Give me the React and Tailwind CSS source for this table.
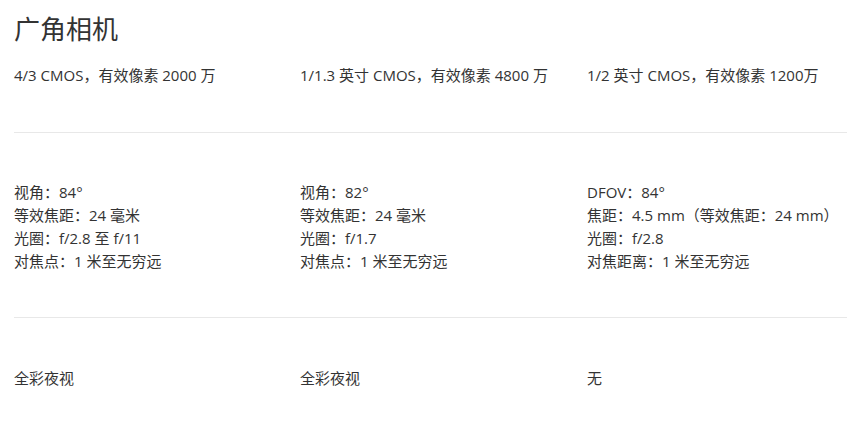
import React from 'react';

const rows = [
  [
    ['4/3 CMOS，有效像素 2000 万'],
    ['1/1.3 英寸 CMOS，有效像素 4800 万'],
    ['1/2 英寸 CMOS，有效像素 1200万'],
  ],
  [
    ['视角：84°', '等效焦距：24 毫米', '光圈：f/2.8 至 f/11', '对焦点：1 米至无穷远'],
    ['视角：82°', '等效焦距：24 毫米', '光圈：f/1.7', '对焦点：1 米至无穷远'],
    ['DFOV：84°', '焦距：4.5 mm（等效焦距：24 mm）', '光圈：f/2.8', '对焦距离：1 米至无穷远'],
  ],
  [['全彩夜视'], ['全彩夜视'], ['无']],
];

const rowPad = ['pt-[17px] pb-[45px]', 'pt-[48px] pb-[44px]', 'pt-[49px] pb-[40px]'];

export default function App() {
  return (
    <div
      className="min-h-screen bg-white pl-[14px] overflow-hidden text-[#333]"
      style={{ fontFamily: '"Open Sans", "Noto Sans CJK SC", sans-serif' }}
    >
      {/* 标题 */}
      <h1 className="pt-[11px] text-[26px] leading-[36px] font-normal text-[#333]">广角相机</h1>

      {rows.map((cols, i) => (
        <div
          key={i}
          className={`grid grid-cols-[286px_287px_1fr] ${rowPad[i]} ${
            i < rows.length - 1 ? 'border-b border-[#e8e8e8]' : ''
          }`}
        >
          {cols.map((lines, j) => (
            <div key={j} className="text-[15px] leading-[23px]">
              {lines.map((l) => (
                <p key={l} className="whitespace-nowrap">{l}</p>
              ))}
            </div>
          ))}
        </div>
      ))}
    </div>
  );
}
